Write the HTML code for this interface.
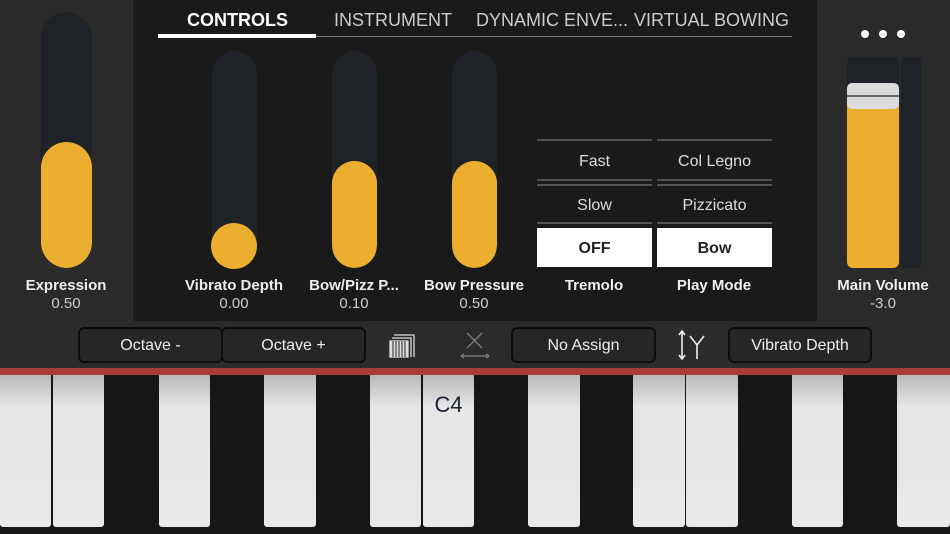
<!DOCTYPE html>
<html><head><style>
*{margin:0;padding:0;box-sizing:border-box}
body{width:950px;height:534px;background:#161616;position:relative;overflow:hidden;font-family:"Liberation Sans",sans-serif;color:#eee}
.a{position:absolute}
.track{position:absolute;background:#1f2226;border-radius:26px;overflow:hidden}
.fill{position:absolute;left:0;right:0;bottom:0;background:#ebae2f;border-radius:26px}
.lbl{position:absolute;width:130px;text-align:center;font-weight:bold;font-size:15px;color:#eee}
.val{position:absolute;width:130px;text-align:center;font-size:15px;color:#ccc}
.tab{position:absolute;top:10px;font-size:18px;color:#ccc}
.opt{position:absolute;width:115px;text-align:center;font-size:16px;color:#ddd}
.ln{position:absolute;height:2px;background:#555;width:115px}
.btn{position:absolute;top:327px;height:36px;border:2px solid #0c0c0c;border-radius:6px;background:#262626;color:#eee;font-size:16px;text-align:center;line-height:34px}
.key{position:absolute;top:375px;height:152px;background:linear-gradient(#b8b8b8,#e6e6e6 32px,#e8e8e8);border-radius:0 0 3px 3px}
</style></head><body>
<div class="a" style="left:0;top:0;width:133px;height:321px;background:#2a2a2a"></div>
<div class="a" style="left:817px;top:0;width:133px;height:321px;background:#2a2a2a"></div>
<div class="a" style="left:133px;top:0;width:684px;height:321px;background:#1a1a1a"></div>

<div class="track" style="left:41px;top:12px;width:51px;height:256px"><div class="fill" style="height:126px"></div></div>
<div class="lbl" style="left:1px;top:277px">Expression</div><div class="val" style="left:1px;top:295px">0.50</div>

<div class="track" style="left:212px;top:51px;width:45px;height:217px"></div>
<div class="a" style="left:211px;top:223px;width:46px;height:46px;border-radius:50%;background:#ebae2f"></div>
<div class="lbl" style="left:169px;top:277px">Vibrato Depth</div><div class="val" style="left:169px;top:295px">0.00</div>

<div class="track" style="left:332px;top:51px;width:45px;height:217px"><div class="fill" style="height:107px"></div></div>
<div class="lbl" style="left:289px;top:277px">Bow/Pizz P...</div><div class="val" style="left:289px;top:295px">0.10</div>

<div class="track" style="left:452px;top:51px;width:45px;height:217px"><div class="fill" style="height:107px"></div></div>
<div class="lbl" style="left:409px;top:277px">Bow Pressure</div><div class="val" style="left:409px;top:295px">0.50</div>

<div class="tab" style="left:187px;color:#fff;font-weight:bold">CONTROLS</div>
<div class="tab" style="left:334px">INSTRUMENT</div>
<div class="tab" style="left:476px">DYNAMIC ENVE...</div>
<div class="tab" style="left:634px">VIRTUAL BOWING</div>
<div class="a" style="left:158px;top:36px;width:634px;height:1px;background:#777"></div>
<div class="a" style="left:158px;top:34px;width:158px;height:4px;background:#fff"></div>

<div class="ln" style="left:537px;top:139px"></div><div class="ln" style="left:657px;top:139px"></div>
<div class="opt" style="left:537px;top:153px">Fast</div><div class="opt" style="left:657px;top:153px">Col Legno</div>
<div class="ln" style="left:537px;top:179px"></div><div class="ln" style="left:657px;top:179px"></div>
<div class="ln" style="left:537px;top:184px"></div><div class="ln" style="left:657px;top:184px"></div>
<div class="opt" style="left:537px;top:197px">Slow</div><div class="opt" style="left:657px;top:197px">Pizzicato</div>
<div class="ln" style="left:537px;top:222px"></div><div class="ln" style="left:657px;top:222px"></div>
<div class="a" style="left:537px;top:228px;width:115px;height:39px;background:#fff;color:#222;font-weight:bold;font-size:16px;text-align:center;line-height:41px">OFF</div>
<div class="a" style="left:657px;top:228px;width:115px;height:39px;background:#fff;color:#222;font-weight:bold;font-size:16px;text-align:center;line-height:41px">Bow</div>
<div class="lbl" style="left:529px;top:277px">Tremolo</div><div class="lbl" style="left:649px;top:277px">Play Mode</div>

<div class="a" style="left:861px;top:30px;width:8px;height:8px;border-radius:50%;background:#fff"></div>
<div class="a" style="left:879px;top:30px;width:8px;height:8px;border-radius:50%;background:#fff"></div>
<div class="a" style="left:897px;top:30px;width:8px;height:8px;border-radius:50%;background:#fff"></div>
<div class="a" style="left:847px;top:57px;width:52px;height:211px;background:#1f2226;border-radius:6px"></div>
<div class="a" style="left:901px;top:57px;width:20px;height:211px;background:#1f2226;border-radius:3px"></div>
<div class="a" style="left:847px;top:90px;width:52px;height:178px;background:#ebae2f;border-radius:0 0 6px 6px"></div>
<div class="a" style="left:847px;top:83px;width:52px;height:26px;background:#dcdcdc;border-radius:5px"></div>
<div class="a" style="left:847px;top:95px;width:52px;height:2px;background:#666"></div>
<div class="lbl" style="left:818px;top:277px">Main Volume</div><div class="val" style="left:818px;top:295px">-3.0</div>

<div class="a" style="left:0;top:321px;width:950px;height:47px;background:#2b2b2b"></div>
<div class="btn" style="left:78px;width:145px">Octave -</div>
<div class="btn" style="left:221px;width:145px">Octave +</div>
<svg class="a" style="left:388px;top:332px" width="28" height="28" viewBox="0 0 28 28" fill="none" stroke="#ddd" stroke-width="1.3"><rect x="2" y="9" width="18" height="16" fill="#ddd"/><path d="M5 9v16M8 9v16M11 9v16M14 9v16M17 9v16" stroke="#222" stroke-width="1"/><path d="M4 6h19v19M6 3h20v22"/></svg>
<svg class="a" style="left:459px;top:330px" width="32" height="30" viewBox="0 0 32 30" stroke="#777" stroke-width="1.5" fill="none"><path d="M8 3l15 15M23 3L8 18M2 26h28M2 26l3-2M2 26l3 2M30 26l-3-2M30 26l-3 2"/></svg>
<div class="btn" style="left:511px;width:145px">No Assign</div>
<svg class="a" style="left:676px;top:329px" width="32" height="32" viewBox="0 0 32 32" stroke="#eee" stroke-width="1.6" fill="none"><path d="M6 2v28M3 6l3-4 3 4M3 26l3 4 3-4M14 7l7 9 7-9M21 16v14"/></svg>
<div class="btn" style="left:728px;width:144px">Vibrato Depth</div>

<div class="a" style="left:0;top:368px;width:950px;height:7px;background:#a83c38"></div>
<div class="key" style="left:0;width:51px"></div>
<div class="key" style="left:53px;width:51px"></div>
<div class="key" style="left:159px;width:51px"></div>
<div class="key" style="left:264px;width:52px"></div>
<div class="key" style="left:370px;width:51px"></div>
<div class="key" style="left:423px;width:51px"><div style="text-align:center;margin-top:17px;font-size:22px;color:#1d2230">C4</div></div>
<div class="key" style="left:528px;width:52px"></div>
<div class="key" style="left:633px;width:52px"></div>
<div class="key" style="left:686px;width:52px"></div>
<div class="key" style="left:792px;width:51px"></div>
<div class="key" style="left:897px;width:53px"></div>
</body></html>
